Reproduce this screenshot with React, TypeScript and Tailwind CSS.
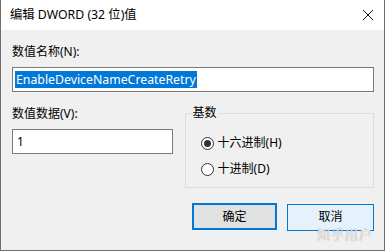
import React from "react";

const font = { fontFamily: '"Noto Sans", "Noto Sans CJK SC", sans-serif' };

function Radio({ checked, label }: { checked?: boolean; label: string }) {
  return (
    <div className="flex items-center h-[16px]">
      <span className="w-[13px] h-[13px] rounded-full border border-[#333] bg-white flex items-center justify-center">
        {checked && <span className="w-[7px] h-[7px] rounded-full bg-[#333]" />}
      </span>
      <span className="ml-[4px] text-[12px] leading-[16px] text-[#000]">{label}</span>
    </div>
  );
}

export default function App() {
  return (
    <div
      className="w-[385px] h-[251px] bg-[#f0f0f0] border-l border-r border-b border-[#6f6f6f] flex flex-col overflow-hidden"
      style={font}
    >
      {/* title bar */}
      <div className="h-[30px] bg-white flex items-center justify-between pl-[9px] pr-[10px] shrink-0">
        <span className="text-[12.3px] leading-[16px] text-[#000]">编辑 DWORD (32 位)值</span>
        <svg width="12" height="12" viewBox="0 0 12 12">
          <path d="M1 1 L11 11 M11 1 L1 11" stroke="#111" strokeWidth="1" />
        </svg>
      </div>

      <div className="flex flex-col pl-[11px] pr-[10px]">
        <div className="mt-[14px] text-[12px] leading-[16px] text-[#000]">数值名称(N):</div>
        <div className="mt-[7px] h-[25px] border border-[#7a7a7a] bg-white flex items-center pl-[2px]">
          <span className="bg-[#0078d7] text-white text-[12.3px] leading-[17px] px-[1px]">
            EnableDeviceNameCreateRetry
          </span>
        </div>

        <div className="flex mt-[14px]">
          <div className="w-[161px] flex flex-col">
            <div className="text-[12px] leading-[16px] text-[#000]">数值数据(V):</div>
            <div className="mt-[7px] h-[25px] border border-[#7a7a7a] bg-white flex items-center pl-[4px]">
              <span className="text-[12px] leading-[16px] text-[#000]">1</span>
            </div>
          </div>

          <div className="relative ml-[12px] mt-[7px] w-[190px] h-[75px] border border-[#dcdcdc]">
            <span className="absolute left-[6px] top-[-9px] px-[1px] bg-[#f0f0f0] text-[12px] leading-[16px] text-[#000]">
              基数
            </span>
            <div className="flex flex-col pl-[15px] pt-[21px] gap-[10px]">
              <Radio checked label="十六进制(H)" />
              <Radio label="十进制(D)" />
            </div>
          </div>
        </div>

        <div className="flex justify-end mt-[15px] gap-[10px]">
          <button className="w-[85px] h-[27px] bg-[#e1e1e1] border-2 border-[#0078d7] text-[12px] leading-[16px] text-[#000]">
            确定
          </button>
          <div className="relative">
            <button className="w-[87px] h-[27px] bg-[#e5f1fb] border border-[#0078d7] text-[12px] leading-[16px] text-[#000]">
              取消
            </button>
            <span className="absolute right-[1px] top-[23px] text-[13px] leading-[16px] text-[#e6e6e6] tracking-[1px] pointer-events-none [text-shadow:0_0_1px_#9a9a9a]">
              知乎用户
            </span>
          </div>
        </div>
      </div>
    </div>
  );
}
